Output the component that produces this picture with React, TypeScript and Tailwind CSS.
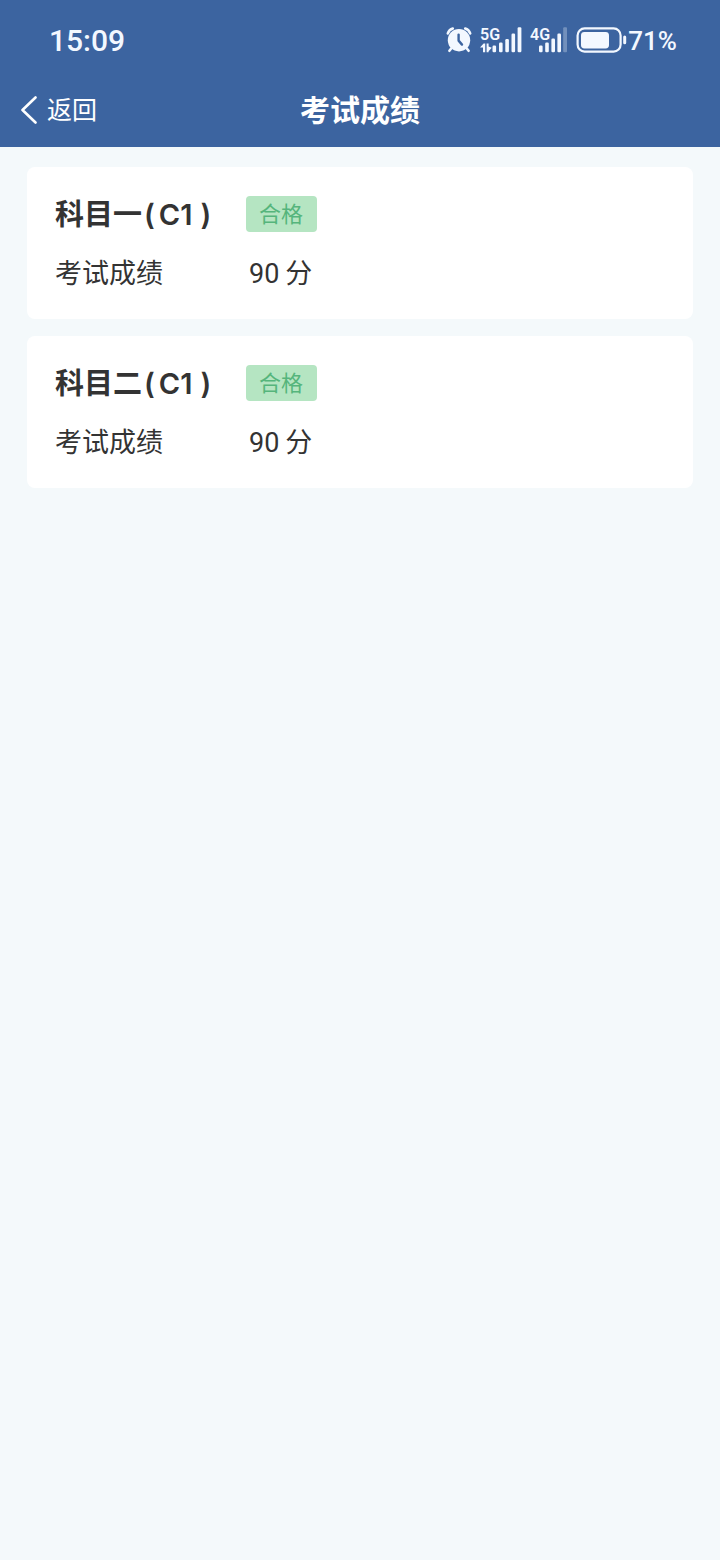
const results = [
  { subject: '科目一', license: 'C1', status: '合格', score: 90 },
  { subject: '科目二', license: 'C1', status: '合格', score: 90 },
];

function AlarmIcon() {
  return (
    <svg className="h-7 w-7" viewBox="0 0 28 28" fill="none" aria-hidden="true">
      <path d="M2.8 7.4C3.6 4.9 5.4 3.1 7.8 2.5" stroke="#f3f8ff" strokeWidth="2.6" strokeLinecap="round" />
      <path d="M25.2 7.4C24.4 4.9 22.6 3.1 20.2 2.5" stroke="#f3f8ff" strokeWidth="2.6" strokeLinecap="round" />
      <path d="M7 21.5 4.4 24.8M21 21.5l2.6 3.3" stroke="#f3f8ff" strokeWidth="2.6" strokeLinecap="round" />
      <circle cx="14" cy="14.2" r="11.2" fill="#f3f8ff" />
      <path d="M13.6 8.6v6l3.4 4" stroke="#3c64a0" strokeWidth="2.4" strokeLinecap="round" strokeLinejoin="round" />
    </svg>
  );
}

function SignalPrimary() {
  return (
    <svg className="h-9 w-[42px]" viewBox="0 -4 42 36" fill="#f3f8ff" role="img" aria-label="5G">
      <text x="0" y="14" fontFamily="Roboto, sans-serif" fontWeight="600" fontSize="16">5G</text>
      <path d="M0 21.6 3.6 17.6H5.2V26.2H3v-4.6zM6.6 17.6h2v3l3.2 1.2-3.2 3.4v1h-2z" />
      <rect x="12.5" y="19.5" width="3.6" height="6.8" rx="1.2" />
      <rect x="19" y="16.5" width="3.6" height="9.8" rx="1.2" />
      <rect x="25.3" y="13" width="3.6" height="13.3" rx="1.2" />
      <rect x="31.5" y="7.5" width="3.6" height="18.8" rx="1.2" />
      <rect x="37.6" y="1.3" width="3.8" height="25" rx="1.2" />
    </svg>
  );
}

function SignalSecondary() {
  return (
    <svg className="h-9 w-[38px]" viewBox="0 -4 38 36" fill="#f3f8ff" role="img" aria-label="4G">
      <text x="0" y="14" fontFamily="Roboto, sans-serif" fontWeight="600" fontSize="16">4G</text>
      <rect x="9" y="19.5" width="3.6" height="6.8" rx="1.2" />
      <rect x="15.2" y="16.5" width="3.6" height="9.8" rx="1.2" />
      <rect x="21.4" y="12.5" width="3.6" height="13.8" rx="1.2" />
      <rect x="27.4" y="7.5" width="3.6" height="18.8" rx="1.2" />
      <rect x="33.2" y="1.3" width="3.8" height="25" rx="1" opacity="0.3" />
    </svg>
  );
}

function BatteryIcon() {
  return (
    <svg className="h-7 w-[51px]" viewBox="0 0 51 28" fill="none" aria-hidden="true">
      <rect x="1.6" y="2.4" width="43" height="23.2" rx="7" stroke="#f3f8ff" strokeWidth="2.2" />
      <rect x="5" y="6" width="28" height="16.4" rx="3.4" fill="#f3f8ff" />
      <rect x="47.2" y="9.6" width="3" height="8.6" rx="1.5" fill="#f3f8ff" />
    </svg>
  );
}

export default function App() {
  return (
    <div className="min-h-screen bg-[#f4f9fb] font-['Roboto','Noto_Sans_CJK_SC',sans-serif] text-[#333333]">
      <header className="bg-[#3c64a0] text-white">
        <div className="flex h-20 items-center justify-between pr-[43px] pl-[49px] text-[#f3f8ff]">
          <span className="pt-0.5 text-[30px] leading-8 font-medium">15:09</span>
          <div className="flex items-center">
            <AlarmIcon />
            <div className="flex items-center gap-2 pl-[7px]">
              <SignalPrimary />
              <SignalSecondary />
              <BatteryIcon />
            </div>
            <span className="pt-0.5 pl-px text-[26px] leading-8 font-medium">71%</span>
          </div>
        </div>
        <div className="grid h-[67px] grid-cols-[1fr_auto_1fr] items-start pt-[9px]">
          <button type="button" className="flex h-11 items-center gap-2 justify-self-start pl-5 text-[25px] leading-9">
            <svg className="h-[30px] w-[19px]" viewBox="0 0 19 30" fill="none" aria-hidden="true">
              <path d="M15.5 1.5 2.5 14l13 12.5" stroke="white" strokeWidth="2.6" strokeLinecap="round" strokeLinejoin="round" />
            </svg>
            返回
          </button>
          <h1 className="text-[30px] leading-11 font-bold">考试成绩</h1>
        </div>
      </header>

      <main className="flex flex-col gap-[17px] px-[27px] py-5">
        {results.map((item) => (
          <section key={item.subject} className="rounded-lg bg-white px-7 pt-[29px] pb-6">
            <div className="flex items-center">
              <h2 className="flex w-[191px] items-center pt-0.5 text-[29px] leading-[34px] font-bold">
                <span>{item.subject}</span>
                <span className="flex gap-1 pl-0.5 font-['Inter','Noto_Sans_CJK_SC',sans-serif] font-semibold">
                  <span>(</span>
                  <span>{item.license}</span>
                  <span className="pl-1">)</span>
                </span>
              </h2>
              <span className="rounded bg-[#b5e5c2] pt-0.5 pr-3.5 pl-[13px] text-[22px] leading-[34px] text-[#55b57c]">
                {item.status}
              </span>
            </div>
            <div className="flex items-center pt-[21px] text-[27px] leading-[42px]">
              <span className="w-[194px]">考试成绩</span>
              <span className="flex gap-1.5">
                <span>{item.score}</span>
                <span>分</span>
              </span>
            </div>
          </section>
        ))}
      </main>
    </div>
  );
}
